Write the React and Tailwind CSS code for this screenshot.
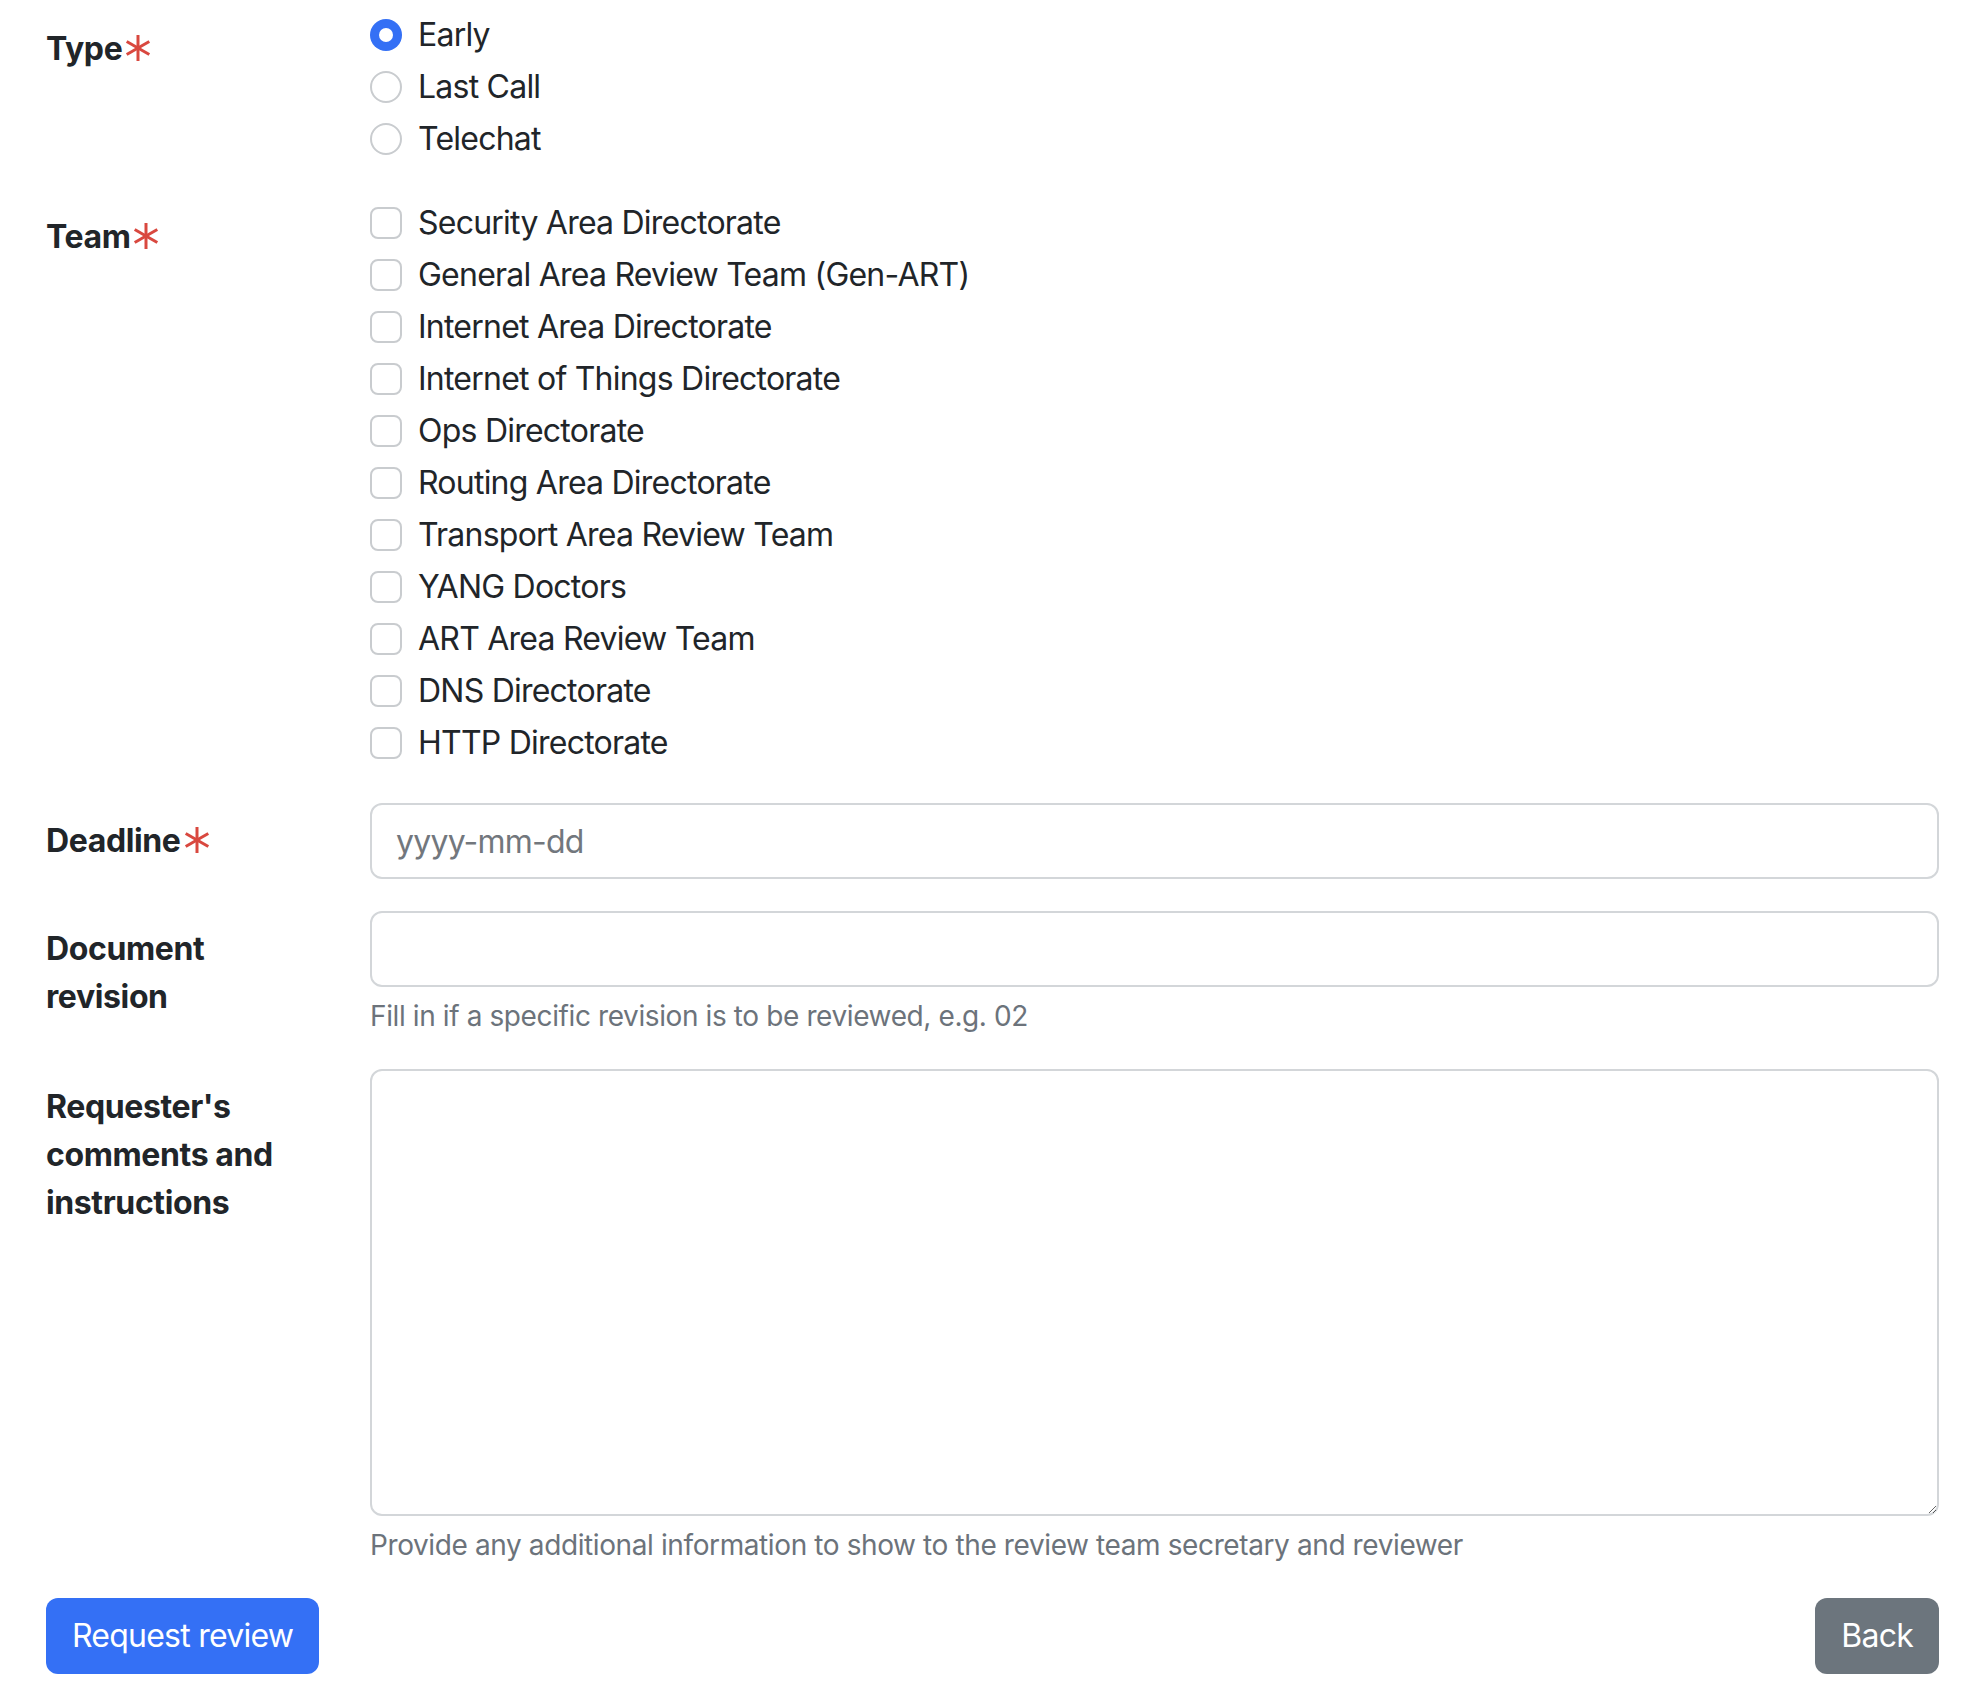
import { useState } from "react";

const teams = [
  "Security Area Directorate",
  "General Area Review Team (Gen-ART)",
  "Internet Area Directorate",
  "Internet of Things Directorate",
  "Ops Directorate",
  "Routing Area Directorate",
  "Transport Area Review Team",
  "YANG Doctors",
  "ART Area Review Team",
  "DNS Directorate",
  "HTTP Directorate",
];

function Required() {
  return (
    <svg
      viewBox="0 0 26 28"
      className="inline-block w-[26px] h-[28px] ml-[3px] -mt-[6px] align-middle"
      stroke="#d9483f"
      strokeWidth="3"
    >
      <line x1="13" y1="1" x2="13" y2="27" />
      <line x1="1.7" y1="7.5" x2="24.3" y2="20.5" />
      <line x1="1.7" y1="20.5" x2="24.3" y2="7.5" />
    </svg>
  );
}

function Row({ label, required, children }) {
  return (
    <div className="flex mb-8">
      <div className="w-[324px] shrink-0 px-6 pt-[14px] font-bold tracking-[-0.012em]">
        {label}
        {required && <Required />}
      </div>
      <div className="flex-1 min-w-0 px-6">{children}</div>
    </div>
  );
}

export default function App() {
  const [type, setType] = useState("Early");
  const [picked, setPicked] = useState([]);

  const toggle = (t) =>
    setPicked((prev) =>
      prev.includes(t) ? prev.filter((x) => x !== t) : [...prev, t]
    );

  return (
    <div className="bg-white min-h-[1700px] pl-[22px] pr-[11px] pt-[11px] font-['Inter',sans-serif] text-[32px] leading-[48px] tracking-[-0.024em] text-[#212529]">
      <Row label="Type" required>
        {["Early", "Last Call", "Telechat"].map((t) => (
          <div
            key={t}
            className="flex items-start h-12 mb-1 cursor-pointer"
            onClick={() => setType(t)}
          >
            {type === t ? (
              <span className="mt-2 w-8 h-8 rounded-full bg-[#3470f5] flex items-center justify-center">
                <span className="w-[14px] h-[14px] rounded-full bg-white" />
              </span>
            ) : (
              <span className="mt-2 w-8 h-8 rounded-full border-2 border-[#c9cccf]" />
            )}
            <span className="ml-4">{t}</span>
          </div>
        ))}
      </Row>

      <Row label="Team" required>
        {teams.map((t) => (
          <div
            key={t}
            className="flex items-start h-12 mb-1 cursor-pointer"
            onClick={() => toggle(t)}
          >
            <span
              className={
                picked.includes(t)
                  ? "mt-2 w-8 h-8 rounded-lg bg-[#3470f5] border-2 border-[#3470f5]"
                  : "mt-2 w-8 h-8 rounded-lg border-2 border-[#c9cccf]"
              }
            />
            <span className="ml-4">{t}</span>
          </div>
        ))}
      </Row>

      <Row label="Deadline" required>
        <input
          type="text"
          placeholder="yyyy-mm-dd"
          className="w-full h-[76px] px-6 border-2 border-[#d3d6d9] rounded-xl placeholder-[#72777d] outline-none"
        />
      </Row>

      <Row label="Document revision">
        <input
          type="text"
          className="w-full h-[76px] px-6 border-2 border-[#d3d6d9] rounded-xl outline-none"
        />
        <div className="mt-2 text-[28px] leading-[42px] tracking-[-0.014em] text-[#6c737b]">
          Fill in if a specific revision is to be reviewed, e.g. 02
        </div>
      </Row>

      <Row label="Requester's comments and instructions">
        <textarea className="block w-full h-[447px] px-6 py-3 border-2 border-[#d3d6d9] rounded-xl outline-none resize-y" />
        <div className="mt-2 text-[28px] leading-[42px] tracking-[-0.014em] text-[#6c737b]">
          Provide any additional information to show to the review team
          secretary and reviewer
        </div>
      </Row>

      <div className="flex justify-between px-6">
        <button className="bg-[#3470f5] text-white px-6 py-3 border-2 border-transparent rounded-xl leading-[48px]">
          Request review
        </button>
        <button className="bg-[#6c757d] text-white px-6 py-3 border-2 border-transparent rounded-xl leading-[48px]">
          Back
        </button>
      </div>
    </div>
  );
}
